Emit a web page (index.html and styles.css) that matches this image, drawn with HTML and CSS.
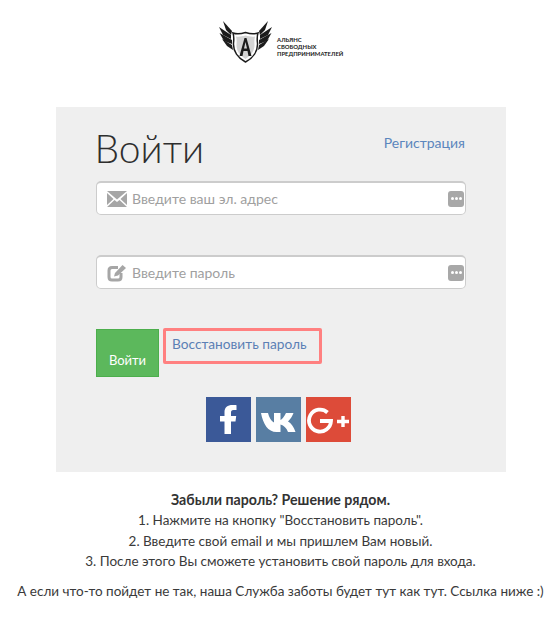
FILE: index.html
```html
<!DOCTYPE html>
<html lang="ru">
<head>
    <meta charset="UTF-8">
    <title>Войти</title>
    <link rel="stylesheet" href="styles.css">
</head>
<body>
    <header class="logo">
        <svg class="logo-mark" width="54" height="42" viewBox="0 0 54 42">
            <g fill="#1c1c1c">
                <path d="M4 0 L13 10 L12 14 L7 9 Z"/>
                <path d="M0 6 L12 14 L12 18 L4 14 Z"/>
                <path d="M0.500 12 L13 19 L13 23 L5 20 Z"/>
                <path d="M3 18 L13 24 L14 29 L8 25 Z"/>
                <path d="M49 0 L40 10 L41 14 L46 9 Z"/>
                <path d="M53 6 L41 14 L41 18 L49 14 Z"/>
                <path d="M52.500 12 L40 19 L40 23 L48 20 Z"/>
                <path d="M50 18 L40 24 L39 29 L45 25 Z"/>
            </g>
            <path d="M26.500 11.500 C22 13 18 13.500 14 12 C15 15 15 18 14.500 22 C14 30 19 37 26.500 41 C34 37 39 30 38.500 22 C38 18 38 15 39 12 C35 13.500 31 13 26.500 11.500 Z" fill="#fff" stroke="#1c1c1c" stroke-width="1.500"/>
            <path d="M26.500 14.500 C23 15.500 20 16 17 15.500 C18 19 17.500 22 17.500 25 C18 31 22 35 26.500 38 C31 35 35 31 35.500 25 C35.500 22 35 19 36 15.500 C33 16 30 15.500 26.500 14.500 Z" fill="#d4d4d4"/>
            <path d="M20.500 35 L25.500 17 L27.500 17 L32.500 35 L29.500 35 L28.500 30 L24.500 30 L23.500 35 Z M25 27.500 H28 L26.500 21 Z" fill="#1c1c1c" fill-rule="evenodd"/>
        </svg>
        <div class="logo-text">
            <span>АЛЬЯНС</span>
            <span>СВОБОДНЫХ</span>
            <span>ПРЕДПРИНИМАТЕЛЕЙ</span>
        </div>
    </header>

    <main class="panel">
        <div class="panel-head">
            <h1>Войти</h1>
            <a class="reg-link" href="#">Регистрация</a>
        </div>

        <div class="field">
            <svg class="field-icon" width="20" height="16" viewBox="0 0 20 16">
                <path d="M0 0 H20 L10 8.500 Z" fill="#a6a6a6"/>
                <path d="M0 2 L6.500 8 L0 14 Z M20 2 L13.500 8 L20 14 Z" fill="#a6a6a6"/>
                <path d="M0 16 L7.500 9 L10 11 L12.500 9 L20 16 Z" fill="#a6a6a6"/>
            </svg>
            <span class="placeholder">Введите ваш эл. адрес</span>
            <span class="dots"><i></i><i></i><i></i></span>
        </div>

        <div class="field field-second">
            <svg class="field-icon" width="20" height="18" viewBox="0 0 20 18">
                <path d="M11 3.500 H5 Q2 3.500 2 6.500 V13 Q2 16 5 16 H11 Q14 16 14 13 V9" fill="none" stroke="#a6a6a6" stroke-width="3"/>
                <path d="M7 12.500 L8 9 L15.500 1 L19 4 L11 11.500 Z" fill="#a6a6a6"/>
            </svg>
            <span class="placeholder">Введите пароль</span>
            <span class="dots"><i></i><i></i><i></i></span>
        </div>

        <div class="actions">
            <button class="btn-login" type="button">Войти</button>
            <a class="restore-link" href="#">Восстановить пароль</a>
        </div>

        <div class="socials">
            <a class="social fb" href="#">
                <svg width="45" height="45" viewBox="0 0 45 45"><path d="M25 37 V24.500 H29.500 L30.200 19 H25 V15.500 C25 14 25.600 13 27.500 13 H30.500 V8.200 C29.500 8 28.500 8 26.500 8 C21.500 8 18.500 10.500 18.500 15 V19 H14 V24.500 H18.500 V37 Z" fill="#fff"/></svg>
            </a>
            <a class="social vk" href="#">
                <svg width="45" height="45" viewBox="0 0 45 45"><path d="M5 16 H12 C13 20 15 24 18 25.500 V16 H24.500 V23 C26.500 22 28.500 19 30 16 H37.500 C36.500 19 34 22.500 32 24.500 C35 26 38 30 39.500 35 H32 C30.500 31 28 28.500 24.500 27.500 V35 H20.500 C12 35 7 27 5 16 Z" fill="#fff"/></svg>
            </a>
            <a class="social gp" href="#">
                <svg width="45" height="45" viewBox="0 0 45 45"><path d="M21.500 15.500 A11 11 0 1 0 25 24 H14" fill="none" stroke="#fff" stroke-width="3.800"/><path d="M37 19 V30 M31 24.500 H43" stroke="#fff" stroke-width="3.400"/></svg>
            </a>
        </div>
    </main>

    <section class="help">
        <p class="help-list">
            <strong>Забыли пароль? Решение рядом.</strong><br>
            1. Нажмите на кнопку "Восстановить пароль".<br>
            2. Введите свой email и мы пришлем Вам новый.<br>
            3. После этого Вы сможете установить свой пароль для входа.
        </p>
        <p class="help-note">А если что-то пойдет не так, наша Служба заботы будет тут как тут. Ссылка ниже :)</p>
    </section>
</body>
</html>
```

FILE: styles.css
```css
* {
    box-sizing: border-box;
}
body {
    margin: 0;
    background: #fff;
    color: #333;
    font-family: Lato, "Open Sans", sans-serif;
    font-size: 14px;
    overflow: hidden;
}
a {
    text-decoration: none;
}

.logo {
    height: 107px;
    padding: 21px 0 0 219px;
    display: flex;
    align-items: flex-start;
    gap: 4px;
}
.logo-text {
    display: flex;
    flex-direction: column;
    margin-top: 15px;
    font-size: 5.900px;
    line-height: 7px;
    font-weight: 700;
    color: #222;
    white-space: nowrap;
}

.panel {
    width: 450px;
    height: 365px;
    margin-left: 56px;
    padding: 0 40px;
    background: #efefef;
}
.panel-head {
    height: 74px;
    display: flex;
    justify-content: space-between;
    align-items: flex-start;
}
h1 {
    margin: 18px 0 0 -1.500px;
    font-size: 39px;
    line-height: 46px;
    font-weight: 300;
    color: #2e2e2e;
}
.reg-link {
    margin-top: 26px;
    margin-right: 1px;
    font-size: 14px;
    line-height: 20px;
    white-space: nowrap;
    color: #5b86bd;
}

.field {
    width: 370px;
    height: 34px;
    display: flex;
    align-items: center;
    padding: 0 8px 0 10px;
    background: #fff;
    border: 1px solid #ccc;
    border-top-width: 2px;
    border-radius: 5px;
}
.field-second {
    margin-top: 40px;
}
.field-icon {
    flex: none;
}
.placeholder {
    flex: 1;
    margin-left: 5px;
    font-size: 14px;
    color: #a0a0a0;
}
.dots {
    width: 16px;
    height: 16px;
    display: flex;
    align-items: center;
    justify-content: center;
    gap: 1px;
    background: #a8a8a8;
    border-radius: 3px;
    margin-right: -7px;
}
.dots i {
    width: 3px;
    height: 3px;
    background: #fff;
    border-radius: 50%;
}

.actions {
    margin-top: 40px;
    display: flex;
    align-items: flex-start;
    gap: 4px;
}
.btn-login {
    width: 63px;
    height: 48px;
    padding: 14px 0 0;
    background: #5cb85c;
    border: 1px solid #4cae4c;
    color: #fff;
    font-family: inherit;
    font-size: 13px;
}
.restore-link {
    width: 159px;
    height: 36px;
    margin-top: -1px;
    padding-left: 6px;
    border: 3px solid #ff8080;
    border-radius: 2px;
    font-size: 13.700px;
    line-height: 25px;
    white-space: nowrap;
    color: #5b7fb5;
}

.socials {
    margin-top: 20px;
    display: flex;
    justify-content: center;
    gap: 5px;
    padding-right: 6px;
}
.social {
    width: 45px;
    height: 45px;
    display: block;
}
.social svg {
    display: block;
}
.fb {
    background: #3b5998;
}
.vk {
    background: #587ea3;
}
.gp {
    background: #dd4b39;
}

.help {
    text-align: center;
    color: #3a3a3a;
    font-size: 13.500px;
    line-height: 20.300px;
    padding: 18px 0 0 5px;
}
.help p {
    margin: 0;
}
.help-list strong {
    font-size: 14.200px;
    font-weight: 700;
    color: #333;
}
.help-note {
    margin-top: 10px !important;
}
```
